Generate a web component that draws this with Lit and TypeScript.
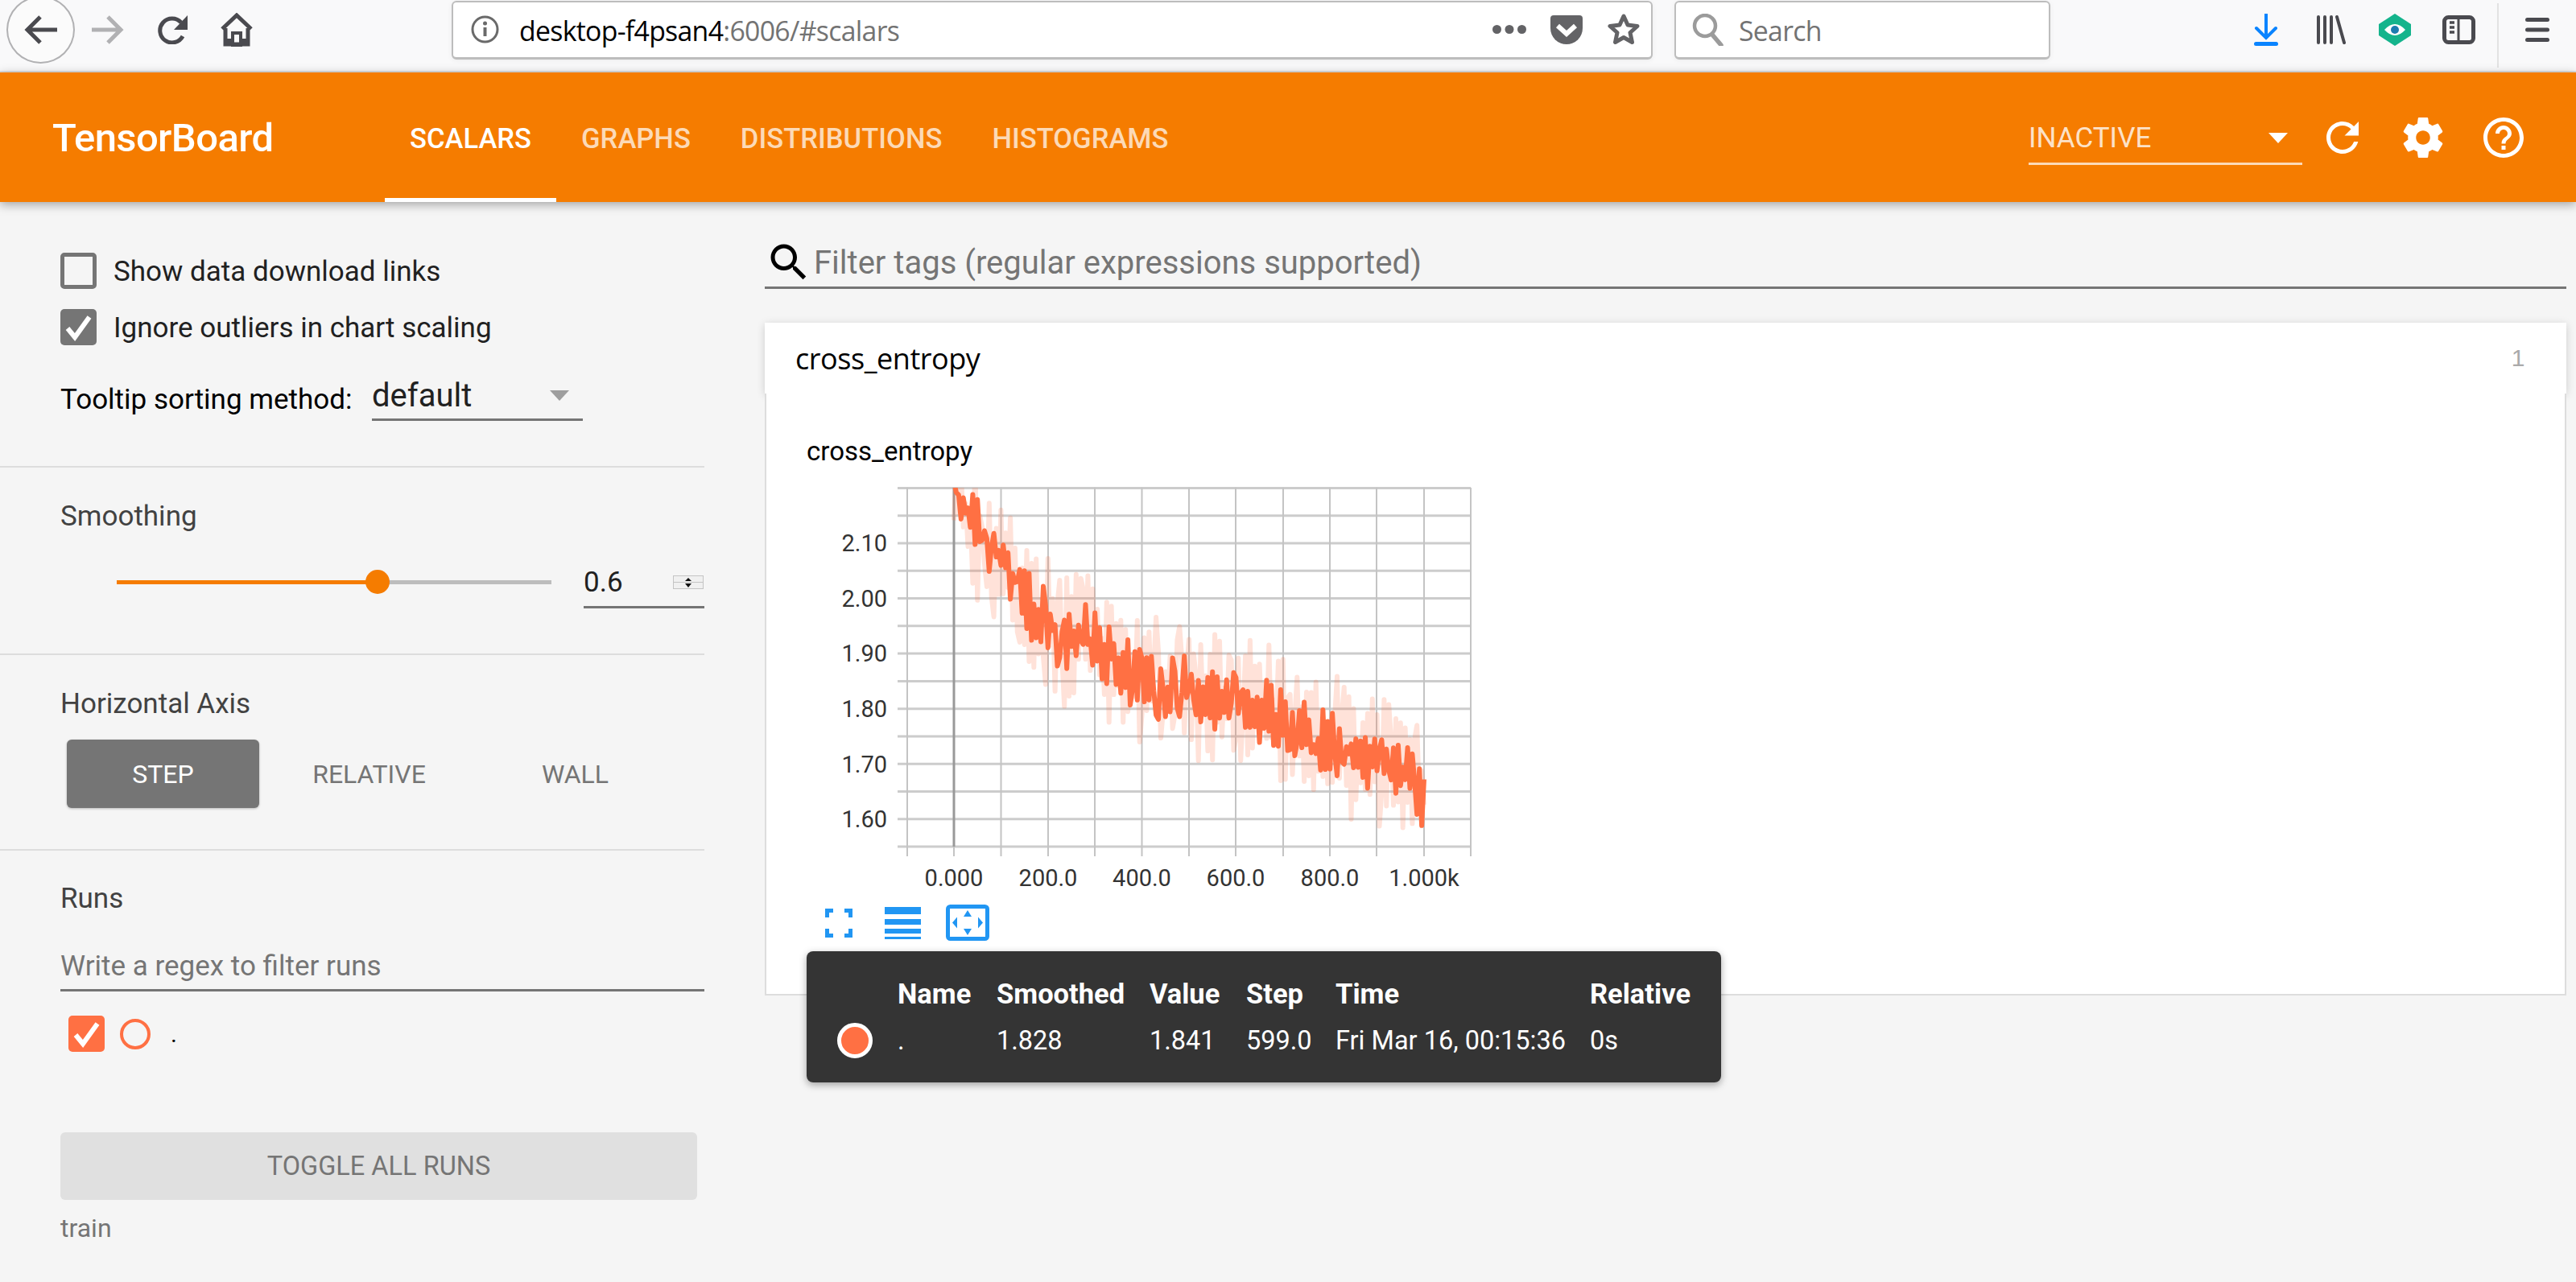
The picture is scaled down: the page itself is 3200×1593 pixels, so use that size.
import { LitElement, html, css, svg } from "lit";
import { customElement } from "lit/decorators.js";

const SANS = css`Roboto, "Liberation Sans", sans-serif`;

const PLOT = { left: 1127, right: 1827, top: 606.5, bottom: 1052, zeroX: 1185, stepW: 0.584 };

// rough outline of the curve: step -> y on the page
const TREND: [number, number][] = [
  [0, 612], [47, 673], [106, 711], [165, 757], [224, 788], [303, 799], [362, 822],
  [421, 849], [499, 860], [598, 876], [647, 884], [696, 903], [794, 918], [843, 941],
  [922, 952], [1000, 975],
];

function trendAt(step: number) {
  for (let i = 1; i < TREND.length; i++) {
    const [a, ya] = TREND[i - 1];
    const [b, yb] = TREND[i];
    if (step <= b) return ya + ((yb - ya) * (step - a)) / (b - a);
  }
  return TREND[TREND.length - 1][1];
}

function seeded(seed: number) {
  return () => {
    seed |= 0;
    seed = (seed + 0x6d2b79f5) | 0;
    let t = Math.imul(seed ^ (seed >>> 15), 1 | seed);
    t = (t + Math.imul(t ^ (t >>> 7), 61 | t)) ^ t;
    return ((t ^ (t >>> 14)) >>> 0) / 4294967296;
  };
}

// the curve zigzags from point to point, which is what makes the band look solid
function buildLines() {
  const rand = seeded(1516);
  const raw: string[] = [];
  const smooth: string[] = [];
  let sign = 1;
  let wobble = 0;
  for (let s = 0; s <= 1000; s += 5) {
    const x = PLOT.zeroX + s * PLOT.stepW;
    const base = trendAt(s);
    const amp = s < 40 ? 0.5 : 1;
    if (rand() > 0.15) sign = -sign;
    wobble = wobble * 0.8 + (rand() - 0.5) * 14;
    const smoothY = base + wobble + sign * rand() * 42 * amp;
    const rawY = base + wobble - sign * (15 + rand() * 70) * amp;
    raw.push(`${x.toFixed(1)},${rawY.toFixed(1)}`);
    smooth.push(`${x.toFixed(1)},${smoothY.toFixed(1)}`);
  }
  return { raw: raw.join(" "), smooth: smooth.join(" ") };
}

const LINES = buildLines();

const chart = () => {
  const hs: number[] = [];
  for (let i = 0; i < 14; i++) hs.push(606.5 + i * 34.27);
  const vs = [1127, 1185, 1243.5, 1302, 1360, 1418.5, 1477, 1535, 1594, 1652, 1710, 1769, 1827];
  const yLabels = [["2.10", 675], ["2.00", 743.5], ["1.90", 812], ["1.80", 881], ["1.70", 949.5], ["1.60", 1018]] as const;
  const xLabels = [["0.000", 1185], ["200.0", 1302], ["400.0", 1418.5], ["600.0", 1535], ["800.0", 1652], ["1.000k", 1769]] as const;
  return svg`
    <defs><clipPath id="plot"><rect x="1127" y="606" width="700" height="446"></rect></clipPath></defs>
    ${hs.map((y) => svg`<line x1="1115" x2="1827" y1=${y} y2=${y} stroke="#ccc" stroke-width="3"></line>`)}
    ${vs.map((x) => svg`<line x1=${x} x2=${x} y1="606" y2="1064" stroke="#c4c4c4" stroke-width="2"></line>`)}
    <line x1="1185" x2="1185" y1="606" y2="1052" stroke="#999" stroke-width="3"></line>
    <g clip-path="url(#plot)" fill="none" stroke="#ff7043" stroke-linejoin="round">
      <polyline points=${LINES.raw} stroke-width="6" opacity="0.2"></polyline>
      <polyline points=${LINES.smooth} stroke-width="6"></polyline>
    </g>
    <g class="tick">
      ${yLabels.map(([t, y]) => svg`<text x="1102" y=${y + 10} text-anchor="end">${t}</text>`)}
      ${xLabels.map(([t, x]) => svg`<text x=${x} y="1101" text-anchor="middle">${t}</text>`)}
    </g>`;
};

const ICON_REFRESH = "M17.65 6.35C16.2 4.9 14.21 4 12 4c-4.42 0-7.99 3.58-7.99 8s3.57 8 7.99 8c3.73 0 6.84-2.55 7.73-6h-2.08c-.82 2.33-3.04 4-5.65 4-3.31 0-6-2.69-6-6s2.69-6 6-6c1.66 0 3.14.69 4.22 1.78L13 11h7V4l-2.35 2.35z";
const ICON_GEAR = "M19.43 12.98c.04-.32.07-.64.07-.98s-.03-.66-.07-.98l2.11-1.65c.19-.15.24-.42.12-.64l-2-3.46c-.12-.22-.39-.3-.61-.22l-2.49 1c-.52-.4-1.08-.73-1.69-.98l-.38-2.65C14.46 2.18 14.25 2 14 2h-4c-.25 0-.46.18-.49.42l-.38 2.65c-.61.25-1.17.59-1.69.98l-2.49-1c-.23-.09-.49 0-.61.22l-2 3.46c-.13.22-.07.49.12.64l2.11 1.65c-.04.32-.07.65-.07.98s.03.66.07.98l-2.11 1.65c-.19.15-.24.42-.12.64l2 3.46c.12.22.39.3.61.22l2.49-1c.52.4 1.08.73 1.69.98l.38 2.65c.03.24.24.42.49.42h4c.25 0 .46-.18.49-.42l.38-2.65c.61-.25 1.17-.59 1.69-.98l2.49 1c.23.09.49 0 .61-.22l2-3.46c.12-.22.07-.49-.12-.64l-2.11-1.65zM12 15.5c-1.93 0-3.5-1.57-3.5-3.5s1.57-3.5 3.5-3.5 3.5 1.57 3.5 3.5-1.57 3.5-3.5 3.5z";
const ICON_HELP = "M11 18h2v-2h-2v2zm1-16C6.48 2 2 6.48 2 12s4.48 10 10 10 10-4.48 10-10S17.52 2 12 2zm0 18c-4.41 0-8-3.59-8-8s3.59-8 8-8 8 3.59 8 8-3.59 8-8 8zm0-14c-2.21 0-4 1.79-4 4h2c0-1.1.9-2 2-2s2 .9 2 2c0 2-3 1.75-3 5h2c0-2.25 3-2.5 3-5 0-2.21-1.79-4-4-4z";
const ICON_SEARCH = "M15.5 14h-.79l-.28-.27C15.41 12.59 16 11.11 16 9.5 16 5.91 13.09 3 9.5 3S3 5.91 3 9.5 5.91 16 9.5 16c1.61 0 3.09-.59 4.23-1.57l.27.28v.79l5 4.99L20.49 19l-4.99-5zm-6 0C7.01 14 5 11.99 5 9.5S7.01 5 9.5 5 14 7.01 14 9.5 11.99 14 9.5 14z";

const check = html`<svg class="tick-mark" viewBox="0 0 45 45"><path d="M9 24 L18 35 L36 10" fill="none" stroke="#fff" stroke-width="6"></path></svg>`;

@customElement("app-root")
export class AppRoot extends LitElement {
  static styles = css`
    :host {
      display: block;
      width: 3200px;
      height: 1593px;
      overflow: hidden;
      background: #f5f5f5;
      font-family: ${SANS};
    }
    .toolbar {
      display: flex;
      align-items: center;
      box-sizing: border-box;
      height: 90px;
      padding: 0 0 14px 8px;
      background: #f9f9fa;
      border-bottom: 2px solid #e0e0e0;
    }
    .toolbar svg { display: block; flex: none; }
    .back-btn {
      flex: none;
      box-sizing: border-box;
      width: 85px;
      height: 84px;
      border: 2px solid #b1b1b3;
      border-radius: 50%;
      background: #fbfbfb;
      display: flex;
      align-items: center;
      justify-content: center;
      margin-right: 21px;
    }
    .fwd { margin-right: 42px; }
    .reload { margin-right: 41px; }
    .field {
      flex: none;
      box-sizing: border-box;
      height: 73px;
      background: #fff;
      border: 2px solid #bdbdbd;
      border-bottom-width: 3px;
      border-radius: 6px;
      display: flex;
      align-items: center;
      box-shadow: 0 1px 6px rgba(0, 0, 0, 0.06);
    }
    .url { width: 1492px; margin-left: 247px; padding-left: 22px; }
    .url-text {
      margin-left: 25px;
      padding-top: 3px;
      flex: 1;
      font: 33.8px "Open Sans", sans-serif;
      letter-spacing: -0.7px;
      color: #000;
    }
    .url-text span { color: #737373; }
    .dots { margin-right: 30px; }
    .pocket { margin-right: 31px; }
    .star { margin-right: 14px; }
    .search { width: 467px; margin-left: 27px; padding-left: 20px; }
    .search-text {
      margin-left: 18px;
      padding-top: 3px;
      font: 33.8px "Open Sans", sans-serif;
      letter-spacing: -0.7px;
      color: #737373;
    }
    .dl { margin-left: 253px; }
    .lib { margin-left: 48px; }
    .hex { margin-left: 41px; }
    .side { margin-left: 39px; }
    .sep { flex: none; width: 2px; height: 80px; background: #e2e2e2; margin: 4px 0 0 27px; align-self: flex-start; }
    .menu { margin-left: 33px; }

    .header {
      position: relative;
      display: flex;
      align-items: center;
      height: 161px;
      padding: 0 60px 0 65px;
      background: #f57c00;
      color: #fff;
      box-shadow: 0 3px 12px rgba(0, 0, 0, 0.35);
    }
    .logo { width: 413px; padding-top: 2px; font-size: 49px; font-weight: 500; letter-spacing: -0.6px; }
    .tabs { display: flex; align-self: stretch; }
    .tab {
      display: flex;
      align-items: center;
      padding: 2px 31px 0;
      font-size: 34.6px;
      font-weight: 500;
      color: rgba(255, 255, 255, 0.72);
    }
    .tab.on { color: #fff; box-shadow: inset 0 -5px 0 #fff; }
    .runs-select {
      margin-left: auto;
      box-sizing: border-box;
      width: 340px;
      height: 68px;
      padding-top: 5px;
      display: flex;
      align-items: center;
      justify-content: space-between;
      border-bottom: 3px solid rgba(255, 255, 255, 0.72);
      font-size: 35px;
      color: rgba(255, 255, 255, 0.8);
    }
    .caret { width: 0; height: 0; border: 12px solid transparent; border-top: 13px solid #fff; border-bottom: 0; margin-right: 18px; }
    .hd-icon { flex: none; width: 60px; height: 60px; fill: #fff; display: block; margin-left: 40px; }
    .hd-icon.first { margin-left: 20px; }

    .body { display: flex; height: 1342px; }
    .sidebar { flex: none; width: 875px; color: #212121; }
    .sec { box-sizing: border-box; padding-left: 75px; border-bottom: 2px solid #ddd; }
    .sec.s1 { height: 330px; padding-top: 63px; }
    .sec.s2 { height: 233px; padding-top: 42px; }
    .sec.s3 { height: 243px; padding-top: 42px; }
    .sec.s4 { padding-top: 41px; border-bottom: 0; }
    .check-row { display: flex; align-items: center; height: 45px; margin-bottom: 25px; font-size: 35px; }
    .check-label { padding-top: 2px; }
    .box {
      flex: none;
      box-sizing: border-box;
      width: 45px;
      height: 45px;
      border: 5px solid #757575;
      border-radius: 5px;
      margin-right: 21px;
    }
    .box.on { background: #757575; border: 0; }
    .tick-mark { display: block; width: 45px; height: 45px; }
    .sort-row { display: flex; align-items: flex-start; margin-top: 32px; font-size: 35px; color: #000; }
    .sort-label { width: 387px; line-height: 72px; }
    .dropdown {
      box-sizing: border-box;
      width: 262px;
      height: 62px;
      padding-top: 2px;
      display: flex;
      align-items: center;
      justify-content: space-between;
      border-bottom: 3px solid #757575;
      font-size: 40px;
      color: #212121;
    }
    .dropdown .caret { border-top-color: #9e9e9e; margin-right: 17px; }
    .sec-title { font-size: 35px; line-height: 38px; color: #424242; }
    .slider-row { display: flex; align-items: center; height: 41px; margin-top: 42px; padding-left: 70px; }
    .track { position: relative; width: 540px; height: 5px; background: #bdbdbd; }
    .track-fill { width: 324px; height: 5px; background: #f57c00; }
    .thumb { position: absolute; left: 309px; top: -13px; width: 30px; height: 30px; border-radius: 50%; background: #f57c00; }
    .num {
      box-sizing: border-box;
      align-self: flex-start;
      flex: none;
      width: 150px;
      height: 53px;
      margin-left: 40px;
      padding-bottom: 10px;
      display: flex;
      align-items: center;
      justify-content: space-between;
      border-bottom: 3px solid #757575;
      font-size: 35px;
    }
    .num svg { display: block; margin-right: 1px; }
    .axis-row { display: flex; gap: 17px; margin: 25px 0 0 8px; }
    .axis-btn {
      box-sizing: border-box;
      width: 239px;
      height: 85px;
      display: flex;
      align-items: center;
      justify-content: center;
      border-radius: 6px;
      font-size: 32px;
      color: #757575;
    }
    .axis-btn.on { background: #757575; color: #fff; box-shadow: 0 1px 3px rgba(0, 0, 0, 0.25); }
    .regex {
      box-sizing: border-box;
      width: 800px;
      height: 62px;
      margin-top: 34px;
      padding-top: 2px;
      display: flex;
      align-items: center;
      border-bottom: 3px solid #757575;
      font-size: 35px;
      color: #757575;
    }
    .run-row { display: flex; align-items: center; height: 45px; margin: 30px 0 0 10px; }
    .run-box { flex: none; width: 45px; height: 45px; border-radius: 5px; background: #ff7043; }
    .run-dot { box-sizing: border-box; width: 38px; height: 38px; margin-left: 19px; border: 4px solid #ff7043; border-radius: 50%; }
    .run-name { margin: 0 0 0 25px; font-size: 30px; color: #000; line-height: 45px; }
    .toggle {
      box-sizing: border-box;
      width: 791px;
      height: 84px;
      margin-top: 100px;
      display: flex;
      align-items: center;
      justify-content: center;
      border-radius: 6px;
      background: #e0e0e0;
      font-size: 32.5px;
      color: #757575;
    }
    .train { margin-top: 17px; line-height: 36px; font-size: 32px; color: #757575; }

    .main { flex: 1; padding: 45px 12px 0 75px; }
    .filter {
      box-sizing: border-box;
      height: 63px;
      display: flex;
      align-items: center;
      border-bottom: 3px solid #757575;
      font-size: 40px;
      color: #757575;
    }
    .filter svg { display: block; width: 60px; height: 60px; margin: 0 1px 0 0; flex: none; fill: #000; }
    .card-head {
      position: relative;
      margin-top: 42px;
      height: 88px;
      padding: 0 52px 0 38px;
      display: flex;
      align-items: center;
      justify-content: space-between;
      background: #fff;
      box-shadow: 0 2px 10px rgba(0, 0, 0, 0.16);
      font: 36px "Open Sans", sans-serif;
      letter-spacing: -0.45px;
      color: #000;
    }
    .card-count { font: 30px "Liberation Sans", sans-serif; color: #aaa; }
    .card-body {
      position: relative;
      box-sizing: border-box;
      height: 748px;
      padding: 52px 0 0 50px;
      background: #fff;
      border: 2px solid #ddd;
      border-top: 0;
    }
    .chart-title { font-size: 33px; line-height: 40px; color: #000; }
    .plot { display: block; width: 860px; height: 520px; margin: 9px 0 0 0; }
    .plot .tick { font: 29px ${SANS}; fill: #333; }
    .chart-btns { display: flex; align-items: center; margin: 14px 0 0 23px; }
    .chart-btns svg { display: block; flex: none; }
    .btn-list { margin-left: 40px; }
    .btn-fit { margin-left: 31px; }
    .tooltip {
      position: absolute;
      left: 50px;
      top: 693px;
      box-sizing: border-box;
      width: 1136px;
      height: 163px;
      display: grid;
      grid-template-columns: 113px 123px 190px 120px 111px 316px 163px;
      grid-template-rows: 89px 44px 30px;
      background: rgba(48, 48, 48, 0.98);
      border-radius: 8px;
      box-shadow: 0 3px 10px rgba(0, 0, 0, 0.35);
      color: #fff;
      font-size: 32.5px;
    }
    .th { font-size: 34.5px; font-weight: 700; align-self: center; padding-top: 17px; }
    .td { align-self: center; }
    .swatch {
      justify-self: start;
      box-sizing: border-box;
      width: 44px;
      height: 44px;
      margin-left: 38px;
      border: 5px solid #fff;
      border-radius: 50%;
      background: #ff7043;
    }
  `;

  render() {
    return html`
      <div class="toolbar">
        <div class="back-btn">
          <svg width="42" height="38" viewBox="0 0 42 38"><path d="M41 19H5M20 3 4 19l16 16" fill="none" stroke="#4a4a4f" stroke-width="5"></path></svg>
        </div>
        <svg class="fwd" width="40" height="36" viewBox="0 0 40 36"><path d="M0 18h35M20 2l16 16-16 16" fill="none" stroke="#b1b1b3" stroke-width="5"></path></svg>
        <svg class="reload" width="37" height="36" viewBox="0 0 37 36"><path d="M29 9A15 15 0 1 0 31 26" fill="none" stroke="#4a4a4f" stroke-width="5"></path><path d="M37 0v18H20z" fill="#4a4a4f"></path></svg>
        <svg class="home" width="40" height="42" viewBox="0 0 40 42"><path d="M2 20 20 3l18 17M6 19v20h28V19" fill="none" stroke="#4a4a4f" stroke-width="5"></path><path d="M15 40V25h10v15z" fill="none" stroke="#4a4a4f" stroke-width="4"></path><path d="M6 32h9v8H6zM25 32h9v8h-9z" fill="#4a4a4f"></path></svg>
        <div class="field url">
          <svg width="35" height="35" viewBox="0 0 35 35"><circle cx="17.500" cy="17.500" r="15.500" fill="none" stroke="#6a6a6a" stroke-width="3"></circle><path d="M17.500 15v11" stroke="#6a6a6a" stroke-width="4"></path><circle cx="17.500" cy="10" r="2.500" fill="#6a6a6a"></circle></svg>
          <div class="url-text">desktop-f4psan4<span>:6006/#scalars</span></div>
          <svg class="dots" width="42" height="11" viewBox="0 0 42 11"><circle cx="5.500" cy="5.500" r="5.500" fill="#636366"></circle><circle cx="21" cy="5.500" r="5.500" fill="#636366"></circle><circle cx="36.500" cy="5.500" r="5.500" fill="#636366"></circle></svg>
          <svg class="pocket" width="40" height="36" viewBox="0 0 40 36"><path d="M4 0h32a4 4 0 0 1 4 4v12a20 20 0 0 1-40 0V4a4 4 0 0 1 4-4z" fill="#636366"></path><path d="M9 13l11 10 11-10" fill="none" stroke="#fff" stroke-width="6"></path></svg>
          <svg class="star" width="40" height="40" viewBox="0 0 40 40"><path d="M20 3l5 11 12 1.500-9 8 2.500 12L20 29.500 9.500 35.500l2.500-12-9-8L15 14z" fill="none" stroke="#636366" stroke-width="5" stroke-linejoin="round"></path></svg>
        </div>
        <div class="field search">
          <svg width="40" height="40" viewBox="0 0 40 40"><circle cx="16" cy="15" r="13" fill="none" stroke="#9b9b9b" stroke-width="4.500"></circle><path d="M25 26l11 13" stroke="#9b9b9b" stroke-width="5.500" stroke-linecap="round"></path></svg>
          <div class="search-text">Search</div>
        </div>
        <svg class="dl" width="30" height="40" viewBox="0 0 30 40"><path d="M15 1v28M3 18l12 12 12-12" fill="none" stroke="#0a84ff" stroke-width="4" stroke-linecap="round"></path><rect y="35" width="30" height="5" rx="2.500" fill="#0a84ff"></rect></svg>
        <svg class="lib" width="36" height="36" viewBox="0 0 36 36"><g stroke="#4a4a4f" stroke-width="4" stroke-linecap="round"><path d="M2 2v32M10 2v32M18 2v32M25 2l9 32"></path></g></svg>
        <svg class="hex" width="40" height="40" viewBox="0 0 40 40"><path d="M20 0l20 13v14L20 40 0 27V13z" fill="#14b48c"></path><path d="M7 20q13-14 26 0-13 14-26 0z" fill="#fff"></path><circle cx="20" cy="20" r="5" fill="#1b7cb0"></circle></svg>
        <svg class="side" width="41" height="36" viewBox="0 0 41 36"><rect x="2.500" y="2.500" width="36" height="31" rx="5" fill="none" stroke="#4a4a4f" stroke-width="5"></rect><path d="M20 2v32" stroke="#4a4a4f" stroke-width="3"></path><path d="M9 9h6M9 15h6M9 21h6" stroke="#4a4a4f" stroke-width="3.500"></path></svg>
        <div class="sep"></div>
        <svg class="menu" width="30" height="30" viewBox="0 0 30 30"><g fill="#4a4a4f"><rect width="30" height="5" rx="2.500"></rect><rect y="12.500" width="30" height="5" rx="2.500"></rect><rect y="25" width="30" height="5" rx="2.500"></rect></g></svg>
      </div>

      <div class="header">
        <div class="logo">TensorBoard</div>
        <div class="tabs">
          <div class="tab on">SCALARS</div>
          <div class="tab">GRAPHS</div>
          <div class="tab">DISTRIBUTIONS</div>
          <div class="tab">HISTOGRAMS</div>
        </div>
        <div class="runs-select"><span>INACTIVE</span><div class="caret"></div></div>
        <svg class="hd-icon first" viewBox="0 0 24 24"><path d=${ICON_REFRESH}></path></svg>
        <svg class="hd-icon" viewBox="0 0 24 24"><path d=${ICON_GEAR}></path></svg>
        <svg class="hd-icon" viewBox="0 0 24 24"><path d=${ICON_HELP}></path></svg>
      </div>

      <div class="body">
        <div class="sidebar">
          <div class="sec s1">
            <div class="check-row"><div class="box"></div><span class="check-label">Show data download links</span></div>
            <div class="check-row"><div class="box on">${check}</div><span class="check-label">Ignore outliers in chart scaling</span></div>
            <div class="sort-row">
              <div class="sort-label">Tooltip sorting method:</div>
              <div class="dropdown"><span>default</span><div class="caret"></div></div>
            </div>
          </div>
          <div class="sec s2">
            <div class="sec-title">Smoothing</div>
            <div class="slider-row">
              <div class="track"><div class="track-fill"></div><div class="thumb"></div></div>
              <div class="num">
                <span>0.6</span>
                <svg width="38" height="17" viewBox="0 0 38 17"><rect x="0.500" y="0.500" width="37" height="16" fill="#f0f0f0" stroke="#c4c4c4"></rect><path d="M0 8.500h38" stroke="#c4c4c4"></path><path d="M19 3l4 4h-8zM19 15l-4-5h8z" fill="#111"></path></svg>
              </div>
            </div>
          </div>
          <div class="sec s3">
            <div class="sec-title">Horizontal Axis</div>
            <div class="axis-row">
              <div class="axis-btn on">STEP</div>
              <div class="axis-btn">RELATIVE</div>
              <div class="axis-btn">WALL</div>
            </div>
          </div>
          <div class="sec s4">
            <div class="sec-title">Runs</div>
            <div class="regex">Write a regex to filter runs</div>
            <div class="run-row">
              <div class="run-box">${check}</div>
              <div class="run-dot"></div>
              <div class="run-name">.</div>
            </div>
            <div class="toggle">TOGGLE ALL RUNS</div>
            <div class="train">train</div>
          </div>
        </div>

        <div class="main">
          <div class="filter">
            <svg viewBox="0 0 24 24"><path d=${ICON_SEARCH}></path></svg>
            Filter tags (regular expressions supported)
          </div>
          <div class="card-head"><span>cross_entropy</span><span class="card-count">1</span></div>
          <div class="card-body">
            <div class="chart-title">cross_entropy</div>
            <svg class="plot" viewBox="1002 590 860 520">${chart()}</svg>
            <div class="chart-btns">
              <svg width="34" height="36" viewBox="0 0 34 36"><path d="M2.500 11V2.500H10M24 2.500h7.500V11M2.500 25v8.500H10M24 33.500h7.500V25" fill="none" stroke="#2196f3" stroke-width="5"></path></svg>
              <svg class="btn-list" width="45" height="40" viewBox="0 0 45 40"><g fill="#2196f3"><rect width="45" height="9"></rect><rect y="15" width="45" height="7"></rect><rect y="27" width="45" height="6"></rect><rect y="37" width="45" height="3"></rect></g></svg>
              <svg class="btn-fit" width="54" height="45" viewBox="0 0 54 45"><rect x="2.500" y="2.500" width="49" height="40" rx="3" fill="none" stroke="#2196f3" stroke-width="5"></rect><path d="M27 7l5 8H22zM27 38l-5-8h10zM8 22.500l6-7v14zM46 22.500l-6-7v14z" fill="#2196f3"></path></svg>
            </div>
            <div class="tooltip">
              <div></div>
              <div class="th">Name</div><div class="th">Smoothed</div><div class="th">Value</div><div class="th">Step</div><div class="th">Time</div><div class="th">Relative</div>
              <div class="swatch"></div>
              <div class="td">.</div><div class="td">1.828</div><div class="td">1.841</div><div class="td">599.0</div><div class="td">Fri Mar 16, 00:15:36</div><div class="td">0s</div>
            </div>
          </div>
        </div>
      </div>
    `;
  }
}
